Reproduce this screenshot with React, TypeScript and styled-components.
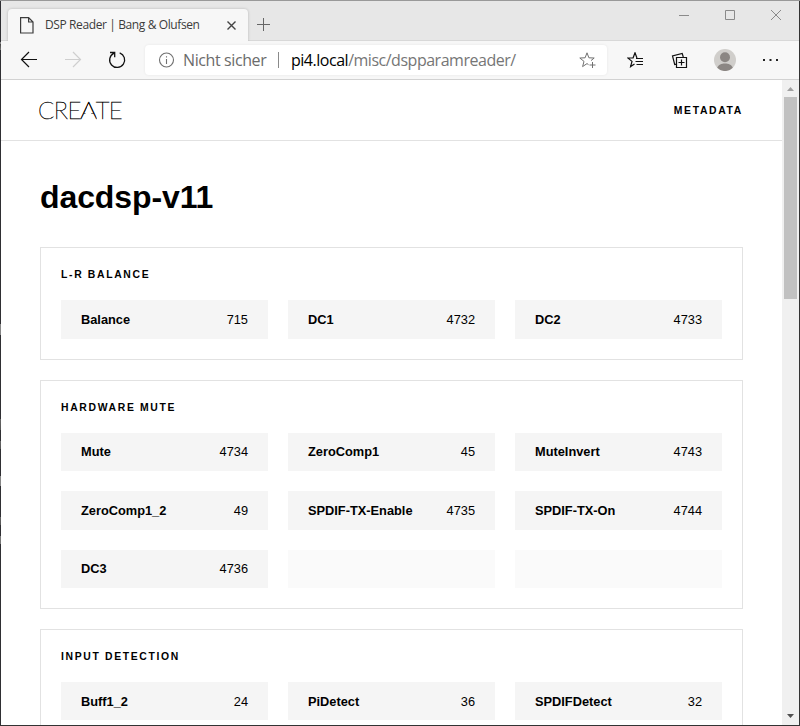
import React from "react";
import styled, { createGlobalStyle } from "styled-components";

const GlobalStyle = createGlobalStyle`
  * { box-sizing: border-box; }
  body { margin: 0; background: #fff; overflow: hidden; }
`;

const uiFont = `"Open Sans", "Noto Sans", sans-serif`;

const Window = styled.div`
  width: 800px;
  height: 726px;
  display: grid;
  grid-template-columns: 1px 1fr 1px;
  grid-template-rows: 1px 1fr 1px;
  background: #333;
  overflow: hidden;
  font-family: "Liberation Sans", Arial, sans-serif;
  color: #000;
`;

const TopEdge = styled.div`
  grid-column: 1 / -1;
  background: #999;
`;

const LeftEdge = styled.div`
  background: linear-gradient(
    #2f2f33 41px, #888 41px, #888 43px, #444 43px, #777 49px, #2f2f33 49px,
    #2f2f33 323px, #868686 323px, #868686 334px, #2f2f33 334px,
    #2f2f33 418px, #666 418px, #555 429px, #2f2f33 429px,
    #2f2f33 440px, #666 440px, #555 448px, #2f2f33 448px,
    #2f2f33 475px, #868686 475px, #868686 485px, #2f2f33 485px,
    #2f2f33 516px, #666 516px, #555 524px, #2f2f33 524px,
    #2f2f33 535px, #777 535px, #777 543px, #2f2f33 543px
  );
`;

const Browser = styled.div`
  display: flex;
  flex-direction: column;
  min-height: 0;
  min-width: 0;
  background: #fff;
`;

const TabStrip = styled.div`
  height: 40px;
  flex: none;
  display: flex;
  align-items: flex-end;
  background: #e7e7e7;
  box-shadow: inset 0 -1px #d8d8d8;
  padding-left: 7px;
`;

const Tab = styled.div`
  width: 240px;
  height: 32px;
  display: flex;
  align-items: center;
  padding: 0 12px;
  border-radius: 4px 4px 0 0;
  background: #f7f7f7;
  box-shadow: 0 0 3px rgba(0, 0, 0, 0.22);
  clip-path: inset(-4px -4px 0 -4px);
`;

const TabTitle = styled.span`
  flex: 1;
  margin-left: 11px;
  font: 12px/16px ${uiFont};
  letter-spacing: -0.39px;
  white-space: nowrap;
  color: #3c3c3c;
`;

const NewTab = styled.div`
  display: flex;
  margin: 0 0 10px 9px;
`;

const Captions = styled.div`
  display: flex;
  align-self: flex-start;
  gap: 34px;
  margin: 8px 17px 0 auto;
`;

const Toolbar = styled.div`
  height: 39px;
  flex: none;
  display: flex;
  align-items: center;
  background: #f7f7f7;
  border-bottom: 1px solid #d2d2d2;
  padding: 0 20px 0 19px;
`;

const NavGroup = styled.div`
  display: flex;
  gap: 24px;
`;

const AddressBar = styled.div`
  width: 462px;
  height: 30px;
  display: flex;
  align-items: center;
  margin-left: 17px;
  padding: 0 11px 0 13px;
  border-radius: 4px;
  background: #fff;
  box-shadow: 0 0 3px rgba(0, 0, 0, 0.07);
  font: 16px/22px ${uiFont};
  white-space: nowrap;
`;

const Security = styled.span`
  width: 86px;
  margin-left: 8px;
  letter-spacing: -0.4px;
  color: #6b6b6b;
`;

const Separator = styled.span`
  width: 1px;
  height: 16px;
  margin-left: 9px;
  background: #8a8a8a;
`;

const Url = styled.span`
  flex: 1;
  margin-left: 12px;
  letter-spacing: -0.48px;
  color: #767676;
`;

const Host = styled.span`
  color: #000;
`;

const Actions = styled.div`
  display: flex;
  align-items: center;
  justify-content: space-between;
  width: 152px;
  margin-left: auto;
`;

const Viewport = styled.div`
  flex: 1;
  min-height: 0;
  display: flex;
`;

const Page = styled.div`
  flex: 1;
  min-width: 0;
  overflow: hidden;
`;

const SiteHeader = styled.header`
  height: 61px;
  display: flex;
  align-items: center;
  justify-content: space-between;
  padding: 0 39px 0 37px;
  border-bottom: 1px solid #e2e2e2;
`;

const Wordmark = styled.div`
  display: flex;
  font: 100 24px/28px Lato, sans-serif;
  letter-spacing: -0.55px;
  -webkit-text-stroke: 0.45px #000;
`;

const OpenLetter = styled.span`
  transform: scaleX(1.14);
  clip-path: polygon(0 0, 100% 0, 100% 100%, 85% 100%, 50% 28%, 15% 100%, 0 100%);
`;

const SmallCaps = styled.div`
  font-size: 10.4px;
  line-height: 12px;
  font-weight: 700;
  letter-spacing: 1.66px;
  text-transform: uppercase;
`;

const SiteNav = styled(SmallCaps).attrs({ as: "nav" })`
  padding-top: 2px;
`;

const Content = styled.main`
  padding: 38px 39px 0;
`;

const Title = styled.h1`
  margin: 0 0 31.4px;
  font-size: 32px;
  line-height: 37px;
  font-weight: 700;
  letter-spacing: -0.1px;
`;

const Card = styled.section`
  margin-bottom: 20px;
  padding: 20px;
  border: 1px solid #e2e2e2;
`;

const CardTitle = styled(SmallCaps).attrs({ as: "h2" })`
  margin: 0 0 19px;
  padding-top: 1px;
`;

const Grid = styled.div`
  display: grid;
  grid-template-columns: repeat(3, 1fr);
  grid-auto-rows: 38.4px;
  gap: 20px;
`;

const Cell = styled.div<{ $empty?: boolean }>`
  display: flex;
  align-items: center;
  justify-content: space-between;
  padding: 0 20px;
  font-size: 12.8px;
  background: ${(p) => (p.$empty ? "#fafafa" : "#f5f5f5")};
`;

const Name = styled.span`
  font-weight: 700;
`;

const Scrollbar = styled.div`
  width: 17px;
  display: flex;
  flex-direction: column;
  align-items: center;
  background: #f0f0f0;
`;

const Thumb = styled.div`
  width: 13px;
  height: 202px;
  background: #c1c1c1;
`;

const ArrowSlot = styled.div<{ $end?: boolean }>`
  display: flex;
  height: 17px;
  margin-top: ${(p) => (p.$end ? "auto" : "0")};
`;

const Icon = styled.svg`
  display: block;
  flex: none;
  fill: none;
  stroke: currentColor;
`;

const sections: { title: string; items: [string, number][] }[] = [
  { title: "L-R Balance", items: [["Balance", 715], ["DC1", 4732], ["DC2", 4733]] },
  {
    title: "Hardware Mute",
    items: [
      ["Mute", 4734], ["ZeroComp1", 45], ["MuteInvert", 4743],
      ["ZeroComp1_2", 49], ["SPDIF-TX-Enable", 4735], ["SPDIF-TX-On", 4744],
      ["DC3", 4736],
    ],
  },
  { title: "Input Detection", items: [["Buff1_2", 24], ["PiDetect", 36], ["SPDIFDetect", 32]] },
];

function ParamCard({ title, items }: { title: string; items: [string, number][] }) {
  const blanks = (3 - (items.length % 3)) % 3;
  return (
    <Card>
      <CardTitle>{title}</CardTitle>
      <Grid>
        {items.map(([name, address]) => (
          <Cell key={name}>
            <Name>{name}</Name>
            <span>{address}</span>
          </Cell>
        ))}
        {Array.from({ length: blanks }, (_, i) => (
          <Cell key={i} $empty />
        ))}
      </Grid>
    </Card>
  );
}

function Tabs() {
  return (
    <TabStrip>
      <Tab>
        <Icon width="14" height="17" color="#3c3c3c" strokeWidth="1.2">
          <path d="M.6.6h8l4.400 4.400v11H.6zM8.600.6V5H13" />
        </Icon>
        <TabTitle>DSP Reader | Bang &amp; Olufsen</TabTitle>
        <Icon width="9" height="9" color="#444" strokeWidth="1.4">
          <path d="M.5.5l8 8M8.5.5l-8 8" />
        </Icon>
      </Tab>
      <NewTab>
        <Icon width="13" height="13" color="#666">
          <path d="M0 6.5h13M6.5 0v13" />
        </Icon>
      </NewTab>
      <Captions>
        <Icon width="12" height="12" color="#8a8a8a">
          <path d="M1 6.5h10" />
        </Icon>
        <Icon width="12" height="12" color="#8a8a8a">
          <path d="M1.5 1.5h9v9h-9z" />
        </Icon>
        <Icon width="12" height="12" color="#8a8a8a">
          <path d="M1 1l10 10M11 1L1 11" />
        </Icon>
      </Captions>
    </TabStrip>
  );
}

function NavigationBar() {
  return (
    <Toolbar>
      <NavGroup>
        <Icon width="20" height="20" color="#111" strokeWidth="1.2">
          <path d="M17 9.5H1.5M9 2L1.5 9.5 9 17" />
        </Icon>
        <Icon width="20" height="20" color="#cfcfcf" strokeWidth="1.2">
          <path d="M1 9.5h15.5M9 2l7.5 7.5L9 17" />
        </Icon>
        <Icon width="20" height="20" color="#111" strokeWidth="1.3">
          <path d="M11.700 2.900a7.500 7.500 0 1 1-6 .4L6.700 2.500M2 2.500h4.700v4.700" />
        </Icon>
      </NavGroup>
      <AddressBar>
        <Icon width="17" height="17" color="#707070" strokeWidth="1.1">
          <circle cx="8.5" cy="8" r="7" />
          <path d="M8.5 7v5M8.5 4.2v1.3" />
        </Icon>
        <Security>Nicht sicher</Security>
        <Separator />
        <Url>
          <Host>pi4.local</Host>/misc/dspparamreader/
        </Url>
        <Icon width="17" height="17" color="#707070" viewBox="-1 0 17 17">
          <path d="M11 8.600 14.200 6 8.900 5.800 7 .8 5.100 5.800-.2 6 4 9.400 2.600 14.600 7 11.600 8.500 12.600M12.500 10v6M9.500 13h6" />
        </Icon>
      </AddressBar>
      <Actions>
        <Icon width="17" height="17" color="#111" strokeWidth="1.2" viewBox="-1 0 17 17">
          <path d="M9.3 6.2 8.9 5.8 7 .8 5.1 5.8-.2 6 4 9.4 2.6 14.6 6.5 12M8 6.5H15M7.5 9.5H15M8.5 12.5H15" />
        </Icon>
        <Icon width="17" height="17" color="#111" strokeWidth="1.2">
          <path d="M5.5 5.5h10v10h-10zM10.5 7.5v6M7.5 10.5h6M12.300 5 11.200 1.500 1.500 4l2.200 8.500 1.600-.4" />
        </Icon>
        <Icon width="22" height="22">
          <circle cx="11" cy="11" r="11" fill="#d0cecb" stroke="none" />
          <circle cx="11" cy="8.2" r="5" fill="#8b8683" stroke="none" />
          <path d="M3.2 18.8C4.5 15.500 7.500 14.500 11 14.500s6.500 1 7.800 4.300A11 11 0 0 1 3.200 18.800z" fill="#8b8683" stroke="none" />
        </Icon>
        <Icon width="16" height="4" color="#222">
          <path d="M0 2h2M6.500 2h2M13 2h2" strokeWidth="2" />
        </Icon>
      </Actions>
    </Toolbar>
  );
}

export default function App() {
  return (
    <>
      <GlobalStyle />
      <Window>
        <TopEdge />
        <LeftEdge />
        <Browser>
          <Tabs />
          <NavigationBar />
          <Viewport>
            <Page>
              <SiteHeader>
                <Wordmark>
                  CRE<OpenLetter>A</OpenLetter>TE
                </Wordmark>
                <SiteNav>Metadata</SiteNav>
              </SiteHeader>
              <Content>
                <Title>dacdsp-v11</Title>
                {sections.map((s) => (
                  <ParamCard key={s.title} {...s} />
                ))}
              </Content>
            </Page>
            <Scrollbar>
              <ArrowSlot>
                <Icon width="7" height="17">
                  <path d="M0 11l3.500-4L7 11z" fill="#a0a0a0" stroke="none" />
                </Icon>
              </ArrowSlot>
              <Thumb />
              <ArrowSlot $end>
                <Icon width="7" height="17">
                  <path d="M0 6l3.500 4L7 6z" fill="#505050" stroke="none" />
                </Icon>
              </ArrowSlot>
            </Scrollbar>
          </Viewport>
        </Browser>
      </Window>
    </>
  );
}
